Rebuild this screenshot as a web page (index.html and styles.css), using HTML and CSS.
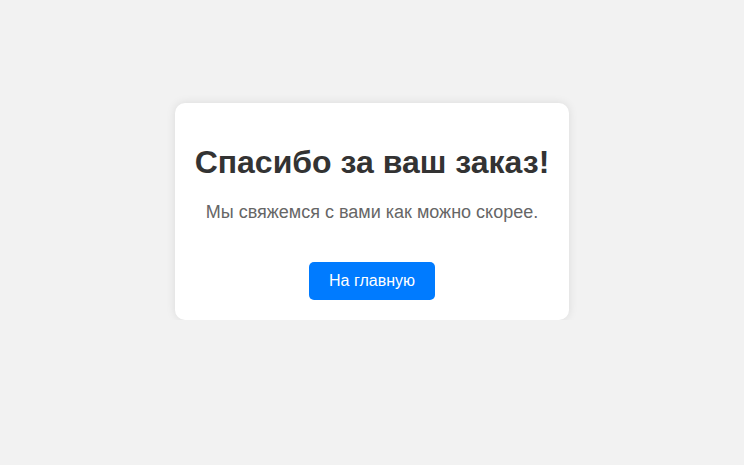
FILE: index.html
```html
<!DOCTYPE html>
<html lang="ru">
<head>
<meta charset="utf-8">
<title>Спасибо за ваш заказ!</title>
<link rel="stylesheet" href="styles.css">
</head>
<body>
<main class="page">
  <div class="card">
    <h1 class="title">Спасибо за ваш заказ!</h1>
    <p class="text">Мы свяжемся с вами как можно скорее.</p>
    <a class="btn" href="#">На главную</a>
  </div>
</main>
</body>
</html>
```
FILE: styles.css
```css
html, body {
  margin: 0;
  padding: 0;
}
body {
  background: #f2f2f2;
  font-family: "Liberation Sans", Arial, sans-serif;
}
.page {
  display: flex;
  justify-content: center;
  align-items: flex-start;
  padding-top: 103px;
}
.card {
  background: #fff;
  padding: 20px;
  border-radius: 10px;
  box-shadow: 0 0 10px rgba(0, 0, 0, 0.1);
  text-align: center;
}
.title {
  font-size: 32px;
  color: #333;
  margin: 21px 0;
}
.text {
  font-size: 18px;
  color: #666;
  margin: 18px 0;
}
.btn {
  display: inline-block;
  margin-top: 21px;
  padding: 10px 20px;
  background: #007bff;
  color: #fff;
  text-decoration: none;
  border-radius: 5px;
  font-size: 16px;
}
```
